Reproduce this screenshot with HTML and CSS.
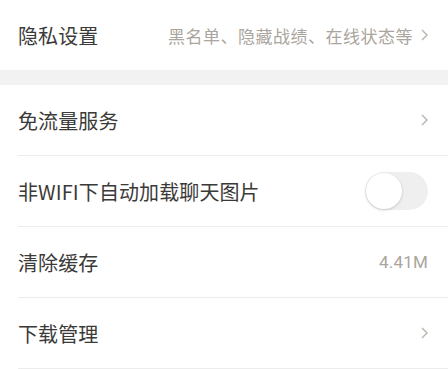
FILE: index.html
```html
<!DOCTYPE html>
<html lang="zh">
<head>
<meta charset="utf-8">
<link rel="stylesheet" href="styles.css">
</head>
<body>
<div class="page">
  <div class="group">
    <div class="row">
      <span class="label">隐私设置</span>
      <span class="value">黑名单、隐藏战绩、在线状态等</span>
      <svg class="chev" viewBox="0 0 7 12" width="7" height="12"><path d="M1 1l5 5-5 5" fill="none" stroke="#b8b3ab" stroke-width="1.4"/></svg>
    </div>
  </div>
  <div class="gap"></div>
  <div class="group">
    <div class="row line">
      <span class="label">免流量服务</span>
      <svg class="chev" viewBox="0 0 7 12" width="7" height="12"><path d="M1 1l5 5-5 5" fill="none" stroke="#b8b3ab" stroke-width="1.4"/></svg>
    </div>
    <div class="row line">
      <span class="label">非WIFI下自动加载聊天图片</span>
      <span class="toggle"><span class="knob"></span></span>
    </div>
    <div class="row line">
      <span class="label">清除缓存</span>
      <span class="value num">4.41M</span>
    </div>
    <div class="row line">
      <span class="label">下载管理</span>
      <svg class="chev" viewBox="0 0 7 12" width="7" height="12"><path d="M1 1l5 5-5 5" fill="none" stroke="#b8b3ab" stroke-width="1.4"/></svg>
    </div>
  </div>
</div>
</body>
</html>
```

FILE: styles.css
```css
* { box-sizing: border-box; }
html, body { margin: 0; padding: 0; background: #fff; }
body {
  font-family: "Noto Sans CJK SC", "Noto Sans", sans-serif;
  width: 448px;
  height: 369px;
  overflow: hidden;
}
.page { display: flex; flex-direction: column; }
.group { padding-left: 18px; }
.gap { height: 15px; background: #f2f2f2; }
.row {
  height: 70px;
  display: flex;
  align-items: center;
  padding-right: 20px;
}
.row.line { height: 71px; border-bottom: 1px solid #ececec; }
.label {
  font-size: 20px;
  color: #3b3a38;
  flex: 1;
  letter-spacing: 0.1px;
}
.value {
  font-size: 17px;
  color: #aaa59d;
  margin-right: 8px;
  letter-spacing: 0.5px;
}
.value.num {
  margin-right: 0;
  font-family: Roboto, "Noto Sans", sans-serif;
  font-size: 17px;
  letter-spacing: 0.2px;
}
.chev { display: block; }
.toggle {
  width: 63px;
  height: 38px;
  border-radius: 19px;
  background: #efefef;
  display: flex;
  align-items: center;
  padding-left: 1px;
}
.knob {
  width: 36px;
  height: 36px;
  border-radius: 50%;
  background: #fff;
  box-shadow: 0 1px 3px rgba(0,0,0,0.18);
}
```
